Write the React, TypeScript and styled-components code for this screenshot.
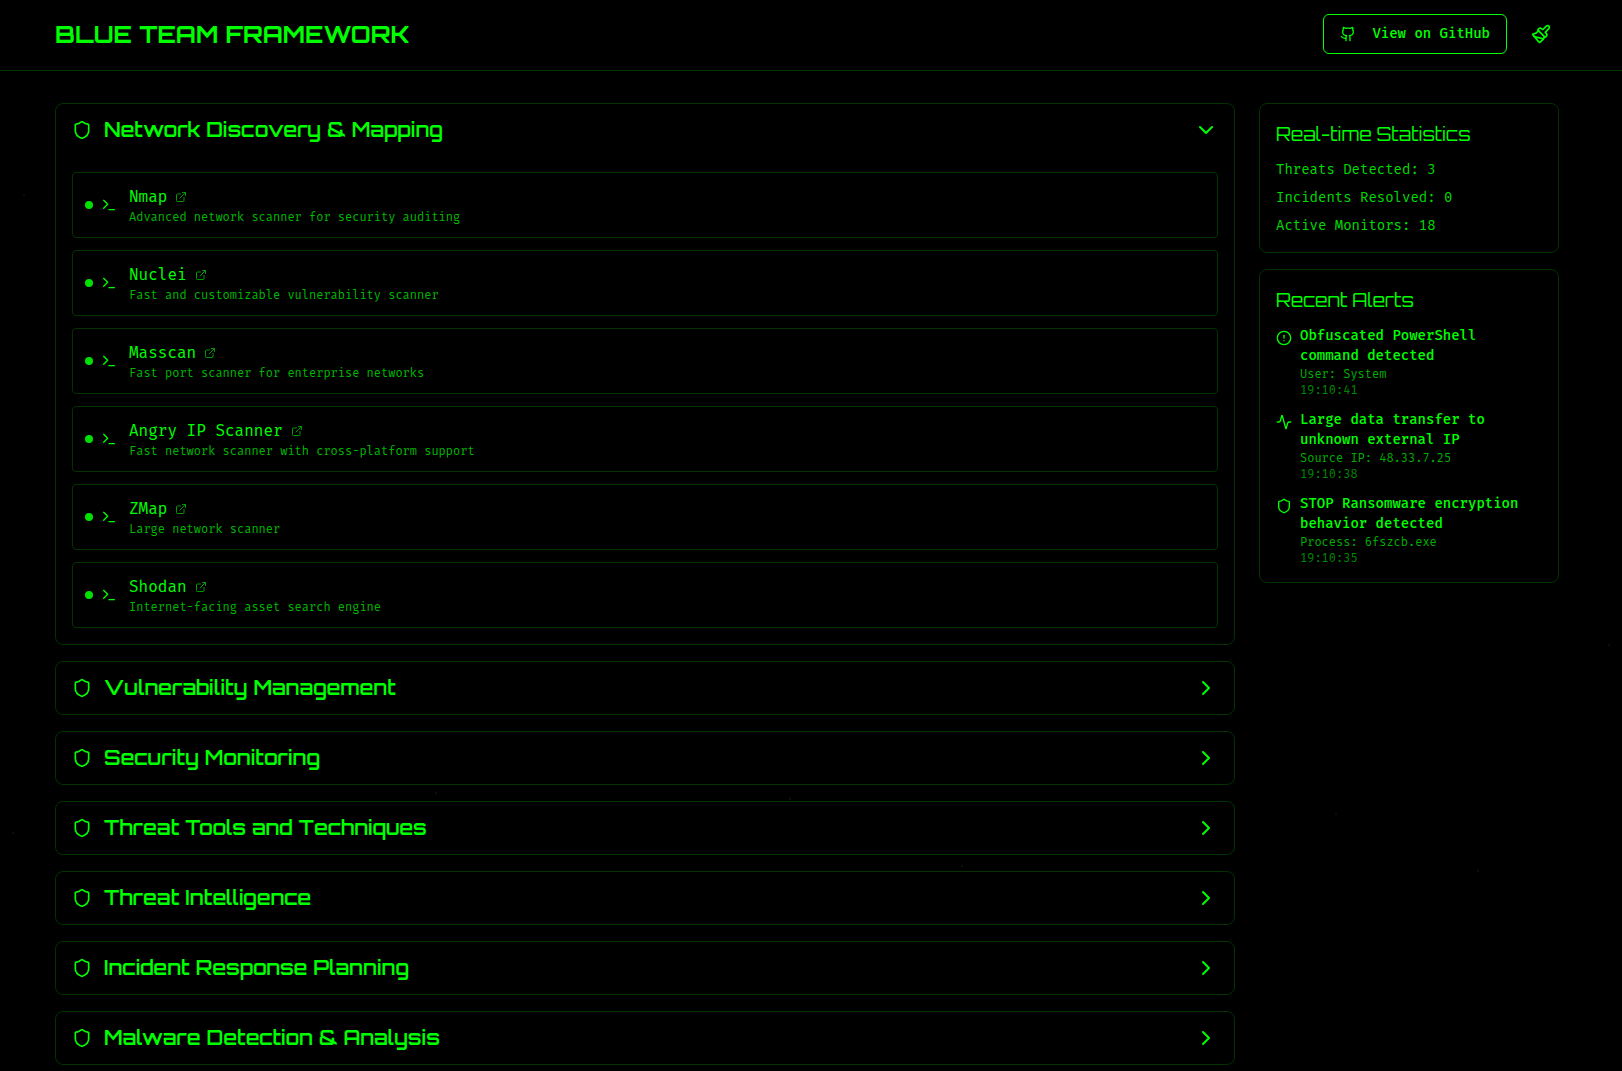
import React, { useState } from 'react';
import styled, { createGlobalStyle } from 'styled-components';
import {
  Activity,
  ChevronDown,
  ChevronRight,
  CircleAlert,
  ExternalLink,
  Github,
  Paintbrush,
  Shield,
  Terminal,
} from 'lucide-react';
import type { LucideIcon } from 'lucide-react';

const green = '#00ff00';
const line = '#003300';
const display = "Orbitron, 'DejaVu Sans', Verdana, sans-serif";
const mono = "'Fira Mono', 'Fira Code', 'DejaVu Sans Mono', 'Liberation Mono', monospace";

const GlobalStyle = createGlobalStyle`
  *, *::before, *::after { box-sizing: border-box; }
  body {
    margin: 0;
    background: #000;
    color: ${green};
    font-family: ${mono};
    font-size: 16px;
    line-height: 24px;
    overflow: hidden auto;
    scrollbar-width: none;
  }
  h1, h2, h3, p, ul { margin: 0; padding: 0; }
  ul { list-style: none; }
  svg { display: block; flex-shrink: 0; }
`;

const Page = styled.div`
  position: relative;
  min-height: 100vh;
  background: #000;
`;

const Particles = styled.svg`
  position: absolute;
  inset: 0;
  width: 100%;
  height: 100%;
  pointer-events: none;
  fill: #001c00;
`;

const Container = styled.div`
  max-width: 1544px;
  margin: 0 auto;
  padding: 0 24px 0 16px;
`;

const Header = styled.header`
  padding: 14px 0 16px;
  border-bottom: 1px solid ${line};
`;

const HeaderRow = styled.div`
  display: flex;
  align-items: center;
  justify-content: space-between;
`;

const Brand = styled.h1`
  font: 700 24px/32px ${display};
`;

const Actions = styled.div`
  display: flex;
  align-items: center;
  gap: 16px;
`;

const GithubLink = styled.a`
  display: flex;
  align-items: center;
  gap: 16px;
  height: 40px;
  padding: 0 16px;
  border: 1px solid ${green};
  border-radius: 6px;
  color: ${green};
  font-size: 14px;
  font-weight: 500;
  line-height: 20px;
  text-decoration: none;
`;

const IconButton = styled.button`
  display: flex;
  padding: 8px;
  border: 0;
  border-radius: 6px;
  background: transparent;
  color: ${green};
  cursor: pointer;
`;

const Columns = styled.main`
  display: grid;
  grid-template-columns: minmax(0, 1fr) 300px;
  align-items: start;
  gap: 24px;
  padding: 32px 0;
`;

const Stack = styled.div`
  display: flex;
  flex-direction: column;
  gap: 16px;
`;

const Card = styled.section`
  border: 1px solid ${line};
  border-radius: 8px;
`;

const SectionTitle = styled.span`
  font: 600 20px/28px ${display};
`;

const SectionToggle = styled.button`
  display: flex;
  align-items: center;
  gap: 12px;
  width: 100%;
  padding: 12px 16px;
  border: 0;
  background: transparent;
  color: ${green};
  font: inherit;
  text-align: left;
  cursor: pointer;

  & > :last-child { margin-left: auto; }
`;

const ToolList = styled.ul`
  display: flex;
  flex-direction: column;
  gap: 12px;
  && { padding: 16px; }
`;

const ToolItem = styled.li`
  display: flex;
  align-items: center;
  gap: 12px;
  padding: 12px;
  border: 1px solid ${line};
  border-radius: 4px;
`;

const ToolMarker = styled.span`
  display: flex;
  align-items: center;
  gap: 8px;
`;

const StatusDot = styled.span`
  width: 8px;
  height: 8px;
  border-radius: 50%;
  background: #00e000;
`;

const ToolLink = styled.a`
  display: flex;
  align-items: center;
  gap: 8px;
  color: ${green};
  text-decoration: none;

  svg { opacity: 0.6; }
`;

const Caption = styled.p<{ $color: string }>`
  color: ${(p) => p.$color};
  font-size: 12px;
  line-height: 16px;
`;

const Panel = styled(Card)`
  display: flex;
  flex-direction: column;
  gap: 12px;
  padding: 16px;
`;

const PanelTitle = styled.h3`
  font: 400 18px/28px ${display};
`;

const PanelList = styled.ul<{ $gap: number }>`
  display: flex;
  flex-direction: column;
  gap: ${(p) => p.$gap}px;
  font-size: 14px;
  line-height: 20px;
`;

const Stat = styled.li`
  color: #00dc00;
`;

const AlertItem = styled.li`
  display: flex;
  align-items: flex-start;
  gap: 8px;

  svg { margin-top: 4px; }
`;

const AlertTitle = styled.p`
  font-weight: 500;
`;

const particles = [
  [24, 195],
  [13, 833],
  [436, 793],
  [790, 799],
  [962, 866],
  [1609, 645],
  [1336, 814],
  [1478, 871],
];

const tools = [
  ['Nmap', 'Advanced network scanner for security auditing'],
  ['Nuclei', 'Fast and customizable vulnerability scanner'],
  ['Masscan', 'Fast port scanner for enterprise networks'],
  ['Angry IP Scanner', 'Fast network scanner with cross-platform support'],
  ['ZMap', 'Large network scanner'],
  ['Shodan', 'Internet-facing asset search engine'],
];

const sections = [
  { title: 'Network Discovery & Mapping', tools },
  { title: 'Vulnerability Management', tools: [] },
  { title: 'Security Monitoring', tools: [] },
  { title: 'Threat Tools and Techniques', tools: [] },
  { title: 'Threat Intelligence', tools: [] },
  { title: 'Incident Response Planning', tools: [] },
  { title: 'Malware Detection & Analysis', tools: [] },
];

const stats = ['Threats Detected: 3', 'Incidents Resolved: 0', 'Active Monitors: 18'];

const alerts: { icon: LucideIcon; title: string; detail: string; time: string }[] = [
  { icon: CircleAlert, title: 'Obfuscated PowerShell command detected', detail: 'User: System', time: '19:10:41' },
  { icon: Activity, title: 'Large data transfer to unknown external IP', detail: 'Source IP: 48.33.7.25', time: '19:10:38' },
  { icon: Shield, title: 'STOP Ransomware encryption behavior detected', detail: 'Process: 6fszcb.exe', time: '19:10:35' },
];

function ToolSection({ title, tools: items, initiallyOpen }: { title: string; tools: string[][]; initiallyOpen: boolean }) {
  const [open, setOpen] = useState(initiallyOpen);
  const Chevron = open ? ChevronDown : ChevronRight;
  return (
    <Card>
      <h2>
        <SectionToggle type="button" aria-expanded={open} onClick={() => setOpen(!open)}>
          <Shield size={20} />
          <SectionTitle>{title}</SectionTitle>
          <Chevron size={24} />
        </SectionToggle>
      </h2>
      {open && items.length > 0 && (
        <ToolList>
          {items.map(([name, description]) => (
            <ToolItem key={name}>
              <ToolMarker>
                <StatusDot />
                <Terminal size={16} />
              </ToolMarker>
              <div>
                <ToolLink href="#">
                  {name}
                  <ExternalLink size={12} />
                </ToolLink>
                <Caption $color="#00b800">{description}</Caption>
              </div>
            </ToolItem>
          ))}
        </ToolList>
      )}
    </Card>
  );
}

export default function App() {
  return (
    <Page>
      <GlobalStyle />
      <Particles aria-hidden="true">
        {particles.map(([x, y]) => (
          <circle key={x} cx={x} cy={y} r={1} />
        ))}
      </Particles>
      <Header>
        <Container>
          <HeaderRow>
            <Brand>BLUE TEAM FRAMEWORK</Brand>
            <Actions>
              <GithubLink href="#">
                <Github size={16} />
                View on GitHub
              </GithubLink>
              <IconButton type="button" aria-label="Change theme">
                <Paintbrush size={20} />
              </IconButton>
            </Actions>
          </HeaderRow>
        </Container>
      </Header>
      <Container>
        <Columns>
          <Stack>
            {sections.map((section, i) => (
              <ToolSection key={section.title} {...section} initiallyOpen={i === 0} />
            ))}
          </Stack>
          <Stack as="aside">
            <Panel>
              <PanelTitle>Real-time Statistics</PanelTitle>
              <PanelList $gap={8}>
                {stats.map((stat) => (
                  <Stat key={stat}>{stat}</Stat>
                ))}
              </PanelList>
            </Panel>
            <Panel>
              <PanelTitle>Recent Alerts</PanelTitle>
              <PanelList $gap={12}>
                {alerts.map(({ icon: Icon, title, detail, time }) => (
                  <AlertItem key={time}>
                    <Icon size={16} />
                    <div>
                      <AlertTitle>{title}</AlertTitle>
                      <Caption $color="#00b000">{detail}</Caption>
                      <Caption $color="#008800">{time}</Caption>
                    </div>
                  </AlertItem>
                ))}
              </PanelList>
            </Panel>
          </Stack>
        </Columns>
      </Container>
    </Page>
  );
}
